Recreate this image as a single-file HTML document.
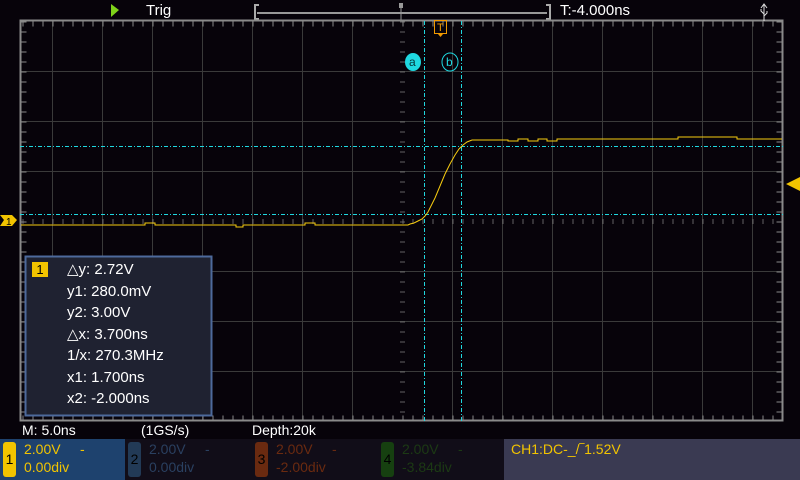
<!DOCTYPE html>
<html><head><meta charset="utf-8"><style>
body{margin:0;width:800px;height:480px;background:#07030a;overflow:hidden;font-family:"Liberation Sans",sans-serif;position:relative}
.t{position:absolute;color:#fff;font-size:14px;white-space:nowrap}
.p{position:absolute;top:439px;height:41px}
.n{position:absolute;left:3px;top:3px;width:13px;height:35px;border-radius:3px;font-size:14px;text-align:center;line-height:35px}
.v{position:absolute;left:24px;font-size:14px;white-space:nowrap}
</style></head><body>
<svg width="800" height="480" style="position:absolute;left:0;top:0">
<polygon points="111,4 119,10 111,17" fill="#7fd31a"/>
<path d="M259,5 h-4 v14 h4 M546,5 h4 v14 h-4" stroke="#aaa" stroke-width="2" fill="none"/>
<line x1="257" y1="13" x2="547" y2="13" stroke="#999" stroke-width="2"/>
<line x1="401" y1="5" x2="401" y2="20" stroke="#999"/>
<rect x="399" y="3" width="4" height="5" fill="#999"/>
<g stroke="#3a3a3a" stroke-width="1">
<line x1="52.5" y1="21" x2="52.5" y2="421"/><line x1="102.5" y1="21" x2="102.5" y2="421"/><line x1="152.5" y1="21" x2="152.5" y2="421"/><line x1="202.5" y1="21" x2="202.5" y2="421"/><line x1="252.5" y1="21" x2="252.5" y2="421"/><line x1="302.5" y1="21" x2="302.5" y2="421"/><line x1="352.5" y1="21" x2="352.5" y2="421"/><line x1="452.5" y1="21" x2="452.5" y2="421"/><line x1="502.5" y1="21" x2="502.5" y2="421"/><line x1="552.5" y1="21" x2="552.5" y2="421"/><line x1="602.5" y1="21" x2="602.5" y2="421"/><line x1="652.5" y1="21" x2="652.5" y2="421"/><line x1="702.5" y1="21" x2="702.5" y2="421"/><line x1="752.5" y1="21" x2="752.5" y2="421"/>
<line x1="20" y1="71.5" x2="783" y2="71.5"/><line x1="20" y1="121.5" x2="783" y2="121.5"/><line x1="20" y1="171.5" x2="783" y2="171.5"/><line x1="20" y1="271.5" x2="783" y2="271.5"/><line x1="20" y1="321.5" x2="783" y2="321.5"/><line x1="20" y1="371.5" x2="783" y2="371.5"/>
</g>
<g stroke="#8a8a8a" stroke-width="1">
<line x1="22" y1="24" x2="783" y2="24" stroke-width="5" stroke-dasharray="1,9" stroke-dashoffset="-0.5"/>
<line x1="22" y1="418" x2="783" y2="418" stroke-width="5" stroke-dasharray="1,9" stroke-dashoffset="-0.5"/>
<line x1="24" y1="21" x2="24" y2="421" stroke-width="5" stroke-dasharray="1,9" stroke-dashoffset="-0.5"/>
<line x1="779" y1="21" x2="779" y2="421" stroke-width="5" stroke-dasharray="1,9" stroke-dashoffset="-0.5"/>
<line x1="22" y1="221.5" x2="783" y2="221.5" stroke-width="5" stroke-dasharray="1,9" stroke-dashoffset="-0.5" opacity="0.7"/>
<line x1="402.5" y1="21" x2="402.5" y2="421" stroke-width="5" stroke-dasharray="1,9" stroke-dashoffset="-0.5" opacity="0.7"/>
</g>
<g stroke="#07030a"><rect x="26" y="26" width="751" height="390" fill="none" stroke="none"/></g>
<rect x="20.5" y="20.5" width="762" height="400" fill="none" stroke="#8a8a8a" stroke-width="2"/>
<line x1="424.5" y1="21" x2="424.5" y2="421" stroke="#1fd8e0" stroke-dasharray="4,2,1,2"/>
<line x1="461.5" y1="21" x2="461.5" y2="421" stroke="#1fd8e0" stroke-dasharray="4,2,1,2"/>
<line x1="20" y1="146.5" x2="783" y2="146.5" stroke="#1fd8e0" stroke-dasharray="4,2,1,2"/>
<line x1="20" y1="214.5" x2="783" y2="214.5" stroke="#1fd8e0" stroke-dasharray="4,2,1,2"/>
<polyline fill="none" stroke="#f7cc10" stroke-width="1" points="21,225 145,225 145,223 155,223 155,225 236,225 236,227 243,227 243,225 305,225 305,223 315,223 315,225 408,225 410,224 414,223 418,221 422,219 425,216 428,212 431,206 435,198 440,186 445,174 450,164 455,155 459,149 463,145 467,142 472,140 508,140 508,141 518,141 518,139 528,139 528,141 538,141 538,139 547,139 547,141 557,141 557,139 678,139 678,137 737,137 737,139 782,139"/>
<polygon points="0,215 12,215 17,220 12,226 0,226 4,220" fill="#f2c400"/>
<text x="6" y="225" font-size="10" font-family="Liberation Sans" fill="#000">1</text>
<polygon points="800,177 800,191 786,184" fill="#f2c400"/>
<rect x="434.5" y="20.5" width="12" height="13" fill="none" stroke="#f29a00"/>
<text x="437" y="31" font-size="11" font-family="Liberation Sans" fill="#f29a00">T</text>
<polygon points="438,34 443,34 440.5,37" fill="#f29a00"/>
<ellipse cx="413" cy="62" rx="8" ry="9" fill="#1fd8e0"/>
<text x="409" y="66" font-size="12" font-family="Liberation Sans" fill="#06353a">a</text>
<ellipse cx="450" cy="62" rx="8" ry="9" fill="none" stroke="#1fd8e0"/>
<text x="446" y="66" font-size="12" font-family="Liberation Sans" fill="#1fd8e0">b</text>
<path d="M764,4 v17 M761,8 l3,-4 3,4 M764,14 l-3,-3 v-2 M764,16 l3,-3 v-2" stroke="#ddd" fill="none"/>
<rect x="25.5" y="256.5" width="186" height="159" fill="#1f2231" stroke="#4d6a9c" stroke-width="2"/>
</svg>
<div class="t" style="left:146px;top:2px;font-size:15px">Trig</div>
<div class="t" style="left:560px;top:2px;font-size:15px">T:-4.000ns</div>
<div style="position:absolute;left:32px;top:262px;width:16px;height:15px;background:#f2c400;color:#000;font-size:13px;text-align:center;line-height:15px">1</div>
<div class="t" style="left:67px;top:259px;line-height:21.5px;font-size:15px">△y: 2.72V<br>y1: 280.0mV<br>y2: 3.00V<br>△x: 3.700ns<br>1/x: 270.3MHz<br>x1: 1.700ns<br>x2: -2.000ns</div>
<div class="t" style="left:22px;top:422px">M: 5.0ns</div>
<div class="t" style="left:141px;top:422px">(1GS/s)</div>
<div class="t" style="left:252px;top:422px">Depth:20k</div>
<div class="p" style="left:0;width:125px;background:#1e426e"><div class="n" style="background:#f2c400;color:#000">1</div><div class="v" style="top:2px;color:#f2c400">2.00V &nbsp;&nbsp;&nbsp;&nbsp;-</div><div class="v" style="top:20px;color:#f2c400">0.00div</div></div>
<div class="p" style="left:125px;width:127px;background:#110d18"><div class="n" style="background:#223a56;color:#000">2</div><div class="v" style="top:2px;color:#2a4060">2.00V &nbsp;&nbsp;&nbsp;&nbsp;-</div><div class="v" style="top:20px;color:#2a4060">0.00div</div></div>
<div class="p" style="left:252px;width:126px;background:#110d18"><div class="n" style="background:#6a2a10;color:#000">3</div><div class="v" style="top:2px;color:#6a2a10">2.00V &nbsp;&nbsp;&nbsp;&nbsp;-</div><div class="v" style="top:20px;color:#6a2a10">-2.00div</div></div>
<div class="p" style="left:378px;width:126px;background:#110d18"><div class="n" style="background:#164010;color:#000">4</div><div class="v" style="top:2px;color:#1c3a14">2.00V &nbsp;&nbsp;&nbsp;&nbsp;-</div><div class="v" style="top:20px;color:#1c3a14">-3.84div</div></div>
<div class="p" style="left:504px;width:296px;background:#3a3a52"><div class="v" style="left:7px;top:2px;color:#f2c400">CH1:DC-_/‾1.52V</div></div>
</body></html>
